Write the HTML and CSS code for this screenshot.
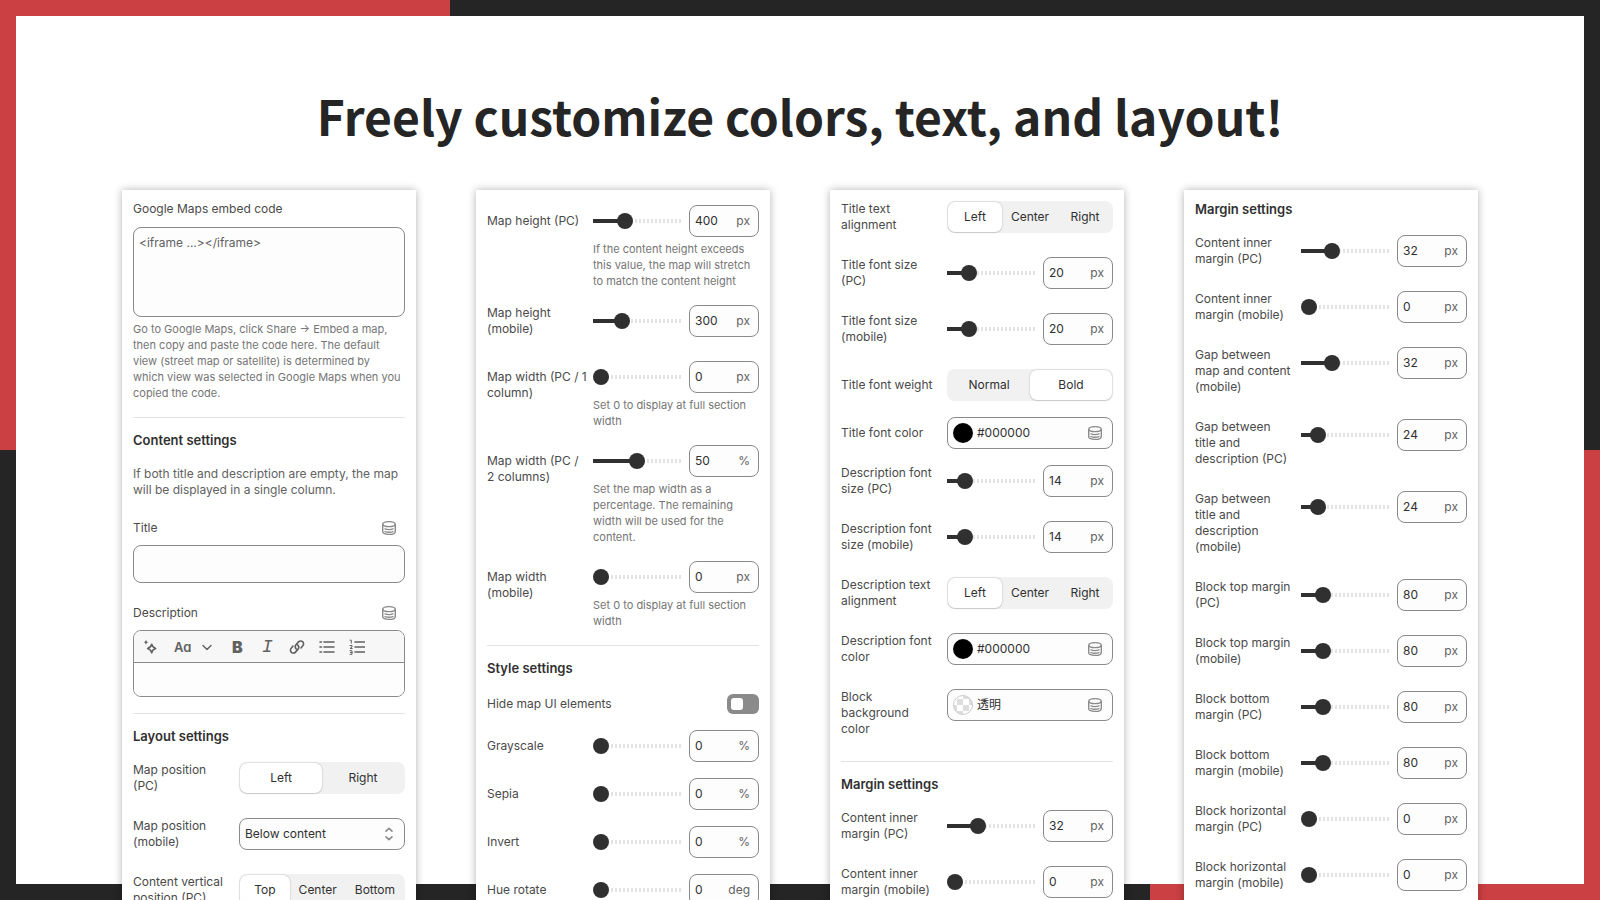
FILE: index.html
```html
<!DOCTYPE html>
<html lang="en">
<head>
    <meta charset="UTF-8">
    <title>Freely customize colors, text, and layout!</title>
    <link rel="stylesheet" href="styles.css">
</head>
<body>

<svg class="sprite" aria-hidden="true">
    <symbol id="icon-data" viewBox="0 0 16 16">
        <path d="M1.7 4.6C1.7 2.6 4.3 1.6 8 1.6s6.3 1 6.3 3v6.8c0 2-2.6 3-6.3 3s-6.3-1-6.3-3z"/>
        <path d="M1.9 4.7C2.4 6 4.8 6.6 8 6.6s5.6-.6 6.1-1.9M4 8.9c1 .5 2.4.7 4 .7s3-.2 4-.7M4 11.6c1 .4 2.4.6 4 .6s3-.2 4-.6"/>
    </symbol>
</svg>

<div class="page">
<main class="sheet">
    <h1>Freely customize colors, text, and layout!</h1>
    <div class="panels">

        <form class="panel">
            <section>
                <div>
                    <label class="lbl embed-lbl" for="embed">Google Maps embed code</label>
                    <textarea id="embed" placeholder="&lt;iframe ...&gt;&lt;/iframe&gt;"></textarea>
                    <p class="help">Go to Google Maps, click Share → Embed a map, then copy and paste the code here. The default view (street map or satellite) is determined by which view was selected in Google Maps when you copied the code.</p>
                </div>
            </section>
            <section>
                <h2>Content settings</h2>
                <p class="info">If both title and description are empty, the map will be displayed in a single column.</p>
                <div>
                    <div class="head">
                        <label class="lbl" for="title">Title</label>
                        <button type="button" class="icon-btn" aria-label="Connect title data"><svg class="icon"><use href="#icon-data"/></svg></button>
                    </div>
                    <input type="text" id="title" class="text">
                </div>
                <div>
                    <div class="head">
                        <label class="lbl" for="desc">Description</label>
                        <button type="button" class="icon-btn" aria-label="Connect description data"><svg class="icon"><use href="#icon-data"/></svg></button>
                    </div>
                    <div class="editor">
                        <div class="toolbar">
                            <button type="button" aria-label="Generate">
                                <svg class="icon fat" viewBox="0 0 16 16"><path d="M9.7 5.2c.5 2.4 1.6 3.5 4 4.3-2.4.7-3.5 1.9-4 4.3-.6-2.4-1.8-3.6-4.1-4.3 2.3-.8 3.5-1.9 4.1-4.3z"/><path class="solid" d="M4 .8c.4 1.5 1 2.1 2.5 2.5C5 3.7 4.4 4.3 4 5.8 3.6 4.3 3 3.7 1.5 3.3 3 2.9 3.6 2.3 4 .8z"/></svg>
                            </button>
                            <button type="button" class="format" aria-label="Formatting">
                                <span>Aa</span>
                                <svg class="icon" viewBox="0 0 16 16"><path d="M4 6.5l4 4 4-4"/></svg>
                            </button>
                            <button type="button" class="bold">B</button>
                            <button type="button" class="italic">I</button>
                            <button type="button" aria-label="Link">
                                <svg class="icon fat" viewBox="0 0 16 16"><path d="M7.2 9.8a2.9 2.9 0 0 1-.5-3.7l2.8-3.2a2.9 2.9 0 0 1 4.3 3.9L12 9M8.8 6.2a2.9 2.9 0 0 1 .5 3.7l-2.8 3.2a2.9 2.9 0 0 1-4.3-3.9L4 7"/></svg>
                            </button>
                            <button type="button" aria-label="Bulleted list">
                                <svg class="icon fat" viewBox="0 0 16 16"><path d="M5 3h10M5 8h10M5 13h10M1 3h1.5M1 8h1.5M1 13h1.5"/></svg>
                            </button>
                            <button type="button" aria-label="Numbered list">
                                <svg class="icon fat" viewBox="0 0 16 16"><path d="M6 3h9.5M6 8h9.5M6 13h9.5"/><path class="thin" d="M1 1.2h1.3v3M1 6.5h2V8l-2 1.5h2.2M1 11.7h2v3.6H1M1.5 13.5H3"/></svg>
                            </button>
                        </div>
                        <textarea id="desc"></textarea>
                    </div>
                </div>
            </section>
            <section>
                <h2>Layout settings</h2>
                <div class="row">
                    <span class="lbl two">Map position (PC)</span>
                    <div class="seg"><button type="button" class="on">Left</button><button type="button">Right</button></div>
                </div>
                <div class="row">
                    <label class="lbl two" for="mapPosMobile">Map position (mobile)</label>
                    <div class="select">
                        <select id="mapPosMobile">
                            <option>Below content</option>
                            <option>Above content</option>
                        </select>
                        <svg class="icon fat" viewBox="0 0 16 16"><path d="M5 5.2L8 2.4l3 2.8M5 10.8l3 2.8 3-2.8"/></svg>
                    </div>
                </div>
                <div class="row">
                    <span class="lbl two">Content vertical position (PC)</span>
                    <div class="seg"><button type="button" class="on">Top</button><button type="button">Center</button><button type="button">Bottom</button></div>
                </div>
            </section>
        </form>

        <form class="panel sizes">
            <section>
                <div class="row">
                    <label class="lbl" for="heightPc">Map height (PC)</label>
                    <div class="slider"><input type="range" min="100" max="1000" value="400" aria-label="Map height (PC)"><span class="num"><input type="text" id="heightPc" value="400"><span>px</span></span></div>
                    <p class="help">If the content height exceeds this value, the map will stretch to match the content height</p>
                </div>
                <div class="row">
                    <label class="lbl two" for="heightMobile">Map height (mobile)</label>
                    <div class="slider"><input type="range" min="100" max="800" value="300" aria-label="Map height (mobile)"><span class="num"><input type="text" id="heightMobile" value="300"><span>px</span></span></div>
                </div>
                <div class="row">
                    <label class="lbl" for="widthPc1">Map width (PC / 1 column)</label>
                    <div class="slider"><input type="range" max="1000" value="0" aria-label="Map width (PC / 1 column)"><span class="num"><input type="text" id="widthPc1" value="0"><span>px</span></span></div>
                    <p class="help">Set 0 to display at full section width</p>
                </div>
                <div class="row">
                    <label class="lbl" for="widthPc2">Map width (PC / 2 columns)</label>
                    <div class="slider"><input type="range" value="50" aria-label="Map width (PC / 2 columns)"><span class="num"><input type="text" id="widthPc2" value="50"><span>%</span></span></div>
                    <p class="help">Set the map width as a percentage. The remaining width will be used for the content.</p>
                </div>
                <div class="row">
                    <label class="lbl" for="widthMobile">Map width (mobile)</label>
                    <div class="slider"><input type="range" max="1000" value="0" aria-label="Map width (mobile)"><span class="num"><input type="text" id="widthMobile" value="0"><span>px</span></span></div>
                    <p class="help">Set 0 to display at full section width</p>
                </div>
            </section>
            <section>
                <h2>Style settings</h2>
                <div class="toggle">
                    <label for="hideUi">Hide map UI elements</label>
                    <input type="checkbox" id="hideUi">
                </div>
                <div class="row">
                    <label class="lbl" for="grayscale">Grayscale</label>
                    <div class="slider"><input type="range" value="0" aria-label="Grayscale"><span class="num"><input type="text" id="grayscale" value="0"><span>%</span></span></div>
                </div>
                <div class="row">
                    <label class="lbl" for="sepia">Sepia</label>
                    <div class="slider"><input type="range" value="0" aria-label="Sepia"><span class="num"><input type="text" id="sepia" value="0"><span>%</span></span></div>
                </div>
                <div class="row">
                    <label class="lbl" for="invert">Invert</label>
                    <div class="slider"><input type="range" value="0" aria-label="Invert"><span class="num"><input type="text" id="invert" value="0"><span>%</span></span></div>
                </div>
                <div class="row">
                    <label class="lbl" for="hue">Hue rotate</label>
                    <div class="slider"><input type="range" max="360" value="0" aria-label="Hue rotate"><span class="num"><input type="text" id="hue" value="0"><span>deg</span></span></div>
                </div>
            </section>
        </form>

        <form class="panel">
            <section>
                <div class="row">
                    <span class="lbl two">Title text alignment</span>
                    <div class="seg"><button type="button" class="on">Left</button><button type="button">Center</button><button type="button">Right</button></div>
                </div>
                <div class="row">
                    <label class="lbl two" for="titleSizePc">Title font size (PC)</label>
                    <div class="slider"><input type="range" value="20" aria-label="Title font size (PC)"><span class="num"><input type="text" id="titleSizePc" value="20"><span>px</span></span></div>
                </div>
                <div class="row">
                    <label class="lbl two" for="titleSizeMobile">Title font size (mobile)</label>
                    <div class="slider"><input type="range" value="20" aria-label="Title font size (mobile)"><span class="num"><input type="text" id="titleSizeMobile" value="20"><span>px</span></span></div>
                </div>
                <div class="row">
                    <span class="lbl">Title font weight</span>
                    <div class="seg"><button type="button">Normal</button><button type="button" class="on">Bold</button></div>
                </div>
                <div class="row">
                    <label class="lbl" for="titleColor">Title font color</label>
                    <div class="color">
                        <button type="button" class="swatch" aria-label="Pick title color"></button>
                        <input type="text" id="titleColor" value="#000000">
                        <svg class="icon"><use href="#icon-data"/></svg>
                    </div>
                </div>
                <div class="row">
                    <label class="lbl two" for="descSizePc">Description font size (PC)</label>
                    <div class="slider"><input type="range" value="14" aria-label="Description font size (PC)"><span class="num"><input type="text" id="descSizePc" value="14"><span>px</span></span></div>
                </div>
                <div class="row">
                    <label class="lbl two" for="descSizeMobile">Description font size (mobile)</label>
                    <div class="slider"><input type="range" value="14" aria-label="Description font size (mobile)"><span class="num"><input type="text" id="descSizeMobile" value="14"><span>px</span></span></div>
                </div>
                <div class="row">
                    <span class="lbl two">Description text alignment</span>
                    <div class="seg"><button type="button" class="on">Left</button><button type="button">Center</button><button type="button">Right</button></div>
                </div>
                <div class="row">
                    <label class="lbl two" for="descColor">Description font color</label>
                    <div class="color">
                        <button type="button" class="swatch" aria-label="Pick description color"></button>
                        <input type="text" id="descColor" value="#000000">
                        <svg class="icon"><use href="#icon-data"/></svg>
                    </div>
                </div>
                <div class="row">
                    <label class="lbl two" for="bgColor">Block background color</label>
                    <div class="color">
                        <button type="button" class="swatch clear" aria-label="Pick background color"></button>
                        <input type="text" id="bgColor" value="透明">
                        <svg class="icon"><use href="#icon-data"/></svg>
                    </div>
                </div>
            </section>
            <section>
                <h2>Margin settings</h2>
                <div class="row">
                    <label class="lbl two" for="innerPcA">Content inner margin (PC)</label>
                    <div class="slider"><input type="range" value="32" aria-label="Content inner margin (PC)"><span class="num"><input type="text" id="innerPcA" value="32"><span>px</span></span></div>
                </div>
                <div class="row">
                    <label class="lbl two" for="innerMobileA">Content inner margin (mobile)</label>
                    <div class="slider"><input type="range" value="0" aria-label="Content inner margin (mobile)"><span class="num"><input type="text" id="innerMobileA" value="0"><span>px</span></span></div>
                </div>
            </section>
        </form>

        <form class="panel margins">
            <section>
                <h2>Margin settings</h2>
                <div class="row">
                    <label class="lbl two" for="innerPc">Content inner margin (PC)</label>
                    <div class="slider"><input type="range" value="32" aria-label="Content inner margin (PC)"><span class="num"><input type="text" id="innerPc" value="32"><span>px</span></span></div>
                </div>
                <div class="row">
                    <label class="lbl two" for="innerMobile">Content inner margin (mobile)</label>
                    <div class="slider"><input type="range" value="0" aria-label="Content inner margin (mobile)"><span class="num"><input type="text" id="innerMobile" value="0"><span>px</span></span></div>
                </div>
                <div class="row">
                    <label class="lbl two" for="gapMap">Gap between map and content (mobile)</label>
                    <div class="slider"><input type="range" value="32" aria-label="Gap between map and content (mobile)"><span class="num"><input type="text" id="gapMap" value="32"><span>px</span></span></div>
                </div>
                <div class="row">
                    <label class="lbl two" for="gapTitlePc">Gap between title and description (PC)</label>
                    <div class="slider"><input type="range" max="200" value="24" aria-label="Gap between title and description (PC)"><span class="num"><input type="text" id="gapTitlePc" value="24"><span>px</span></span></div>
                </div>
                <div class="row">
                    <label class="lbl two" for="gapTitleMobile">Gap between title and description (mobile)</label>
                    <div class="slider"><input type="range" max="200" value="24" aria-label="Gap between title and description (mobile)"><span class="num"><input type="text" id="gapTitleMobile" value="24"><span>px</span></span></div>
                </div>
                <div class="row">
                    <label class="lbl two" for="topPc">Block top margin (PC)</label>
                    <div class="slider"><input type="range" max="400" value="80" aria-label="Block top margin (PC)"><span class="num"><input type="text" id="topPc" value="80"><span>px</span></span></div>
                </div>
                <div class="row">
                    <label class="lbl two" for="topMobile">Block top margin (mobile)</label>
                    <div class="slider"><input type="range" max="400" value="80" aria-label="Block top margin (mobile)"><span class="num"><input type="text" id="topMobile" value="80"><span>px</span></span></div>
                </div>
                <div class="row">
                    <label class="lbl two" for="bottomPc">Block bottom margin (PC)</label>
                    <div class="slider"><input type="range" max="400" value="80" aria-label="Block bottom margin (PC)"><span class="num"><input type="text" id="bottomPc" value="80"><span>px</span></span></div>
                </div>
                <div class="row">
                    <label class="lbl two" for="bottomMobile">Block bottom margin (mobile)</label>
                    <div class="slider"><input type="range" max="400" value="80" aria-label="Block bottom margin (mobile)"><span class="num"><input type="text" id="bottomMobile" value="80"><span>px</span></span></div>
                </div>
                <div class="row">
                    <label class="lbl two" for="sidePc">Block horizontal margin (PC)</label>
                    <div class="slider"><input type="range" max="400" value="0" aria-label="Block horizontal margin (PC)"><span class="num"><input type="text" id="sidePc" value="0"><span>px</span></span></div>
                </div>
                <div class="row">
                    <label class="lbl two" for="sideMobile">Block horizontal margin (mobile)</label>
                    <div class="slider"><input type="range" max="400" value="0" aria-label="Block horizontal margin (mobile)"><span class="num"><input type="text" id="sideMobile" value="0"><span>px</span></span></div>
                </div>
            </section>
        </form>

    </div>
</main>
</div>

<script>
    let sliders = document.querySelectorAll(".slider");

    sliders.forEach(function (slider) {
        let range = slider.querySelector("input[type=range]");
        let num = slider.querySelector(".num input");

        function fill() {
            let part = (range.value - range.min) / ((range.max || 100) - range.min);
            range.style.setProperty("--fill", part * 100 + "%");
        }

        range.oninput = function () {
            num.value = range.value;
            fill();
        };
        num.oninput = function () {
            range.value = num.value;
            fill();
        };
        fill();
    });

    document.querySelectorAll(".seg button").forEach(function (btn) {
        btn.onclick = function () {
            btn.parentNode.querySelector(".on").classList.remove("on");
            btn.classList.add("on");
        };
    });
</script>
</body>
</html>
```

FILE: styles.css
```css
* {
    box-sizing: border-box;
}
body {
    margin: 0;
    font-family: Inter, "Noto Sans CJK JP", sans-serif;
    font-size: 12px;
    line-height: 16px;
    color: #4a4a4a;
}
h1, h2, p {
    margin: 0;
}
input, textarea, select, button {
    font: inherit;
    color: #303030;
    margin: 0;
}
button {
    border: none;
    background: none;
    padding: 0;
}
.sprite {
    display: none;
}

/* dark frame with two red corners */
.page {
    display: flex;
    height: 100vh;
    padding: 16px;
    overflow: hidden;
    background:
        linear-gradient(#cb4042, #cb4042) left top / 50vh 50vh no-repeat,
        linear-gradient(#cb4042, #cb4042) right bottom / 50vh 50vh no-repeat,
        #252525;
}
.sheet {
    flex: 1;
    min-width: 0;
    padding: 59px 16px 0;
    background: #fff;
}
h1 {
    margin-bottom: 35px;
    font-family: "Noto Sans CJK JP", sans-serif;
    font-size: 48px;
    font-weight: 700;
    line-height: 80px;
    text-align: center;
    color: #252525;
}
.panels {
    display: flex;
    justify-content: center;
    align-items: flex-start;
    gap: 60px;
}
.panel {
    width: 294px;
    padding: 11px;
    background: #fff;
    box-shadow: 0 0 8px rgba(0, 0, 0, 0.3);
}
.sizes {
    padding-top: 15px;
}
.margins {
    padding-top: 9px;
}
section {
    display: flex;
    flex-direction: column;
    gap: 16px;
}
section + section {
    margin-top: 16px;
    padding-top: 12px;
    border-top: 1px solid #e3e3e3;
}
h2 {
    font-size: 13px;
    font-weight: 600;
    line-height: 20px;
    color: #303030;
}
.info {
    color: #616161;
}
.help {
    margin-top: 4px;
    padding-right: 3px;
    font-size: 11px;
    color: #757575;
}

/* label on the left, control on the right */
.row {
    display: grid;
    grid-template-columns: 101px minmax(0, 1fr);
    column-gap: 5px;
}
.row .lbl {
    grid-row: span 2;
    padding: 8px 0;
}
.row .two {
    padding: 0 4px 8px 0;
}
.row .help {
    grid-column: 2;
}
.head {
    display: flex;
    justify-content: space-between;
    align-items: center;
    height: 28px;
    padding-right: 8px;
    margin-bottom: 3px;
}
.embed-lbl {
    display: block;
    margin-bottom: 10px;
}

.icon {
    width: 16px;
    height: 16px;
    fill: none;
    stroke: #8a8a8a;
    stroke-width: 1.4;
    stroke-linecap: round;
    stroke-linejoin: round;
}
.icon-btn, .icon {
    display: block;
    flex: none;
}
.fat {
    stroke-width: 1.6;
}
.icon .thin {
    stroke-width: 1;
}
.icon .solid {
    fill: #616161;
    stroke: none;
}

textarea, .text, .num, .color, .select select, .editor {
    border: 1px solid #8a8a8a;
    border-radius: 8px;
    background: #fdfdfd;
}
textarea {
    display: block;
    width: 100%;
    height: 90px;
    padding: 7px 5px;
    resize: none;
}
textarea::placeholder {
    color: #616161;
}
.text {
    width: 100%;
    height: 38px;
    padding: 0 5px;
    display: block;
}
.editor {
    overflow: hidden;
}
.editor textarea {
    height: 33px;
    border: none;
    border-radius: 0;
}
.toolbar {
    display: flex;
    align-items: center;
    gap: 14px;
    height: 32px;
    padding: 0 8px;
    border-bottom: 1px solid #8a8a8a;
    background: #f7f7f7;
}
.toolbar .icon {
    stroke: #616161;
}
.toolbar button {
    min-width: 16px;
    color: #616161;
}
.toolbar .format {
    display: flex;
    align-items: center;
    gap: 8px;
    margin-left: 2px;
    font-size: 13px;
    font-weight: 600;
    font-feature-settings: "cv11";
}
.toolbar .bold {
    font-size: 16px;
    font-weight: 900;
}
.toolbar .italic {
    font-family: "Liberation Mono", monospace;
    font-size: 18px;
    font-style: italic;
}

.seg {
    display: flex;
    height: 32px;
    padding: 1px;
    border-radius: 8px;
    background: #f1f1f1;
}
.seg button {
    flex: 1;
    padding: 0 9px;
    border-radius: 7px;
}
.seg .on {
    background: #fff;
    box-shadow: 0 0 2px rgba(0, 0, 0, 0.25), 0 1px 1px rgba(0, 0, 0, 0.1);
}

.select {
    display: grid;
    align-items: center;
    height: 32px;
}
.select select, .select .icon {
    grid-area: 1 / 1;
}
.select select {
    appearance: none;
    width: 100%;
    height: 32px;
    padding: 0 5px;
}
.select .icon {
    justify-self: end;
    margin-right: 8px;
    pointer-events: none;
}

.slider {
    display: flex;
    align-items: center;
    gap: 8px;
    height: 32px;
}
.slider input[type=range] {
    --fill: 0%;
    appearance: none;
    flex: 1;
    width: 0;
    min-width: 0;
    height: 16px;
    background:
        linear-gradient(#303030, #303030) left center / var(--fill) 4px no-repeat,
        repeating-linear-gradient(to left, #e3e3e3 0 2px, transparent 2px 4px) right center / 100% 4px no-repeat;
    border-radius: 2px;
}
.slider input[type=range]::-webkit-slider-thumb {
    appearance: none;
    width: 16px;
    height: 16px;
    border-radius: 50%;
    background: #303030;
}
.num {
    display: flex;
    align-items: center;
    flex: none;
    width: 70px;
    height: 32px;
    padding: 0 8px 0 5px;
    color: #616161;
}
.num input, .color input {
    flex: 1;
    min-width: 0;
    width: 0;
    padding: 0;
    border: none;
    background: none;
}

.color {
    display: flex;
    align-items: center;
    height: 32px;
    padding: 0 9px 0 5px;
}
.color input {
    margin-left: 4px;
}
.swatch {
    width: 20px;
    height: 20px;
    border-radius: 50%;
    background: #000;
}
.clear {
    border: 1px solid #ccc;
    background: repeating-conic-gradient(#fff 0 25%, #ddd 0 50%) center / 12px 12px;
}

.toggle {
    display: flex;
    justify-content: space-between;
    align-items: center;
}
.toggle input {
    appearance: none;
    display: flex;
    align-items: center;
    width: 32px;
    height: 20px;
    padding: 4px;
    border-radius: 6px;
    background: #8a8a8a;
}
.toggle input::before {
    content: "";
    width: 12px;
    height: 12px;
    border-radius: 3px;
    background: #fff;
}
.toggle input:checked {
    justify-content: flex-end;
    background: #303030;
}
```
